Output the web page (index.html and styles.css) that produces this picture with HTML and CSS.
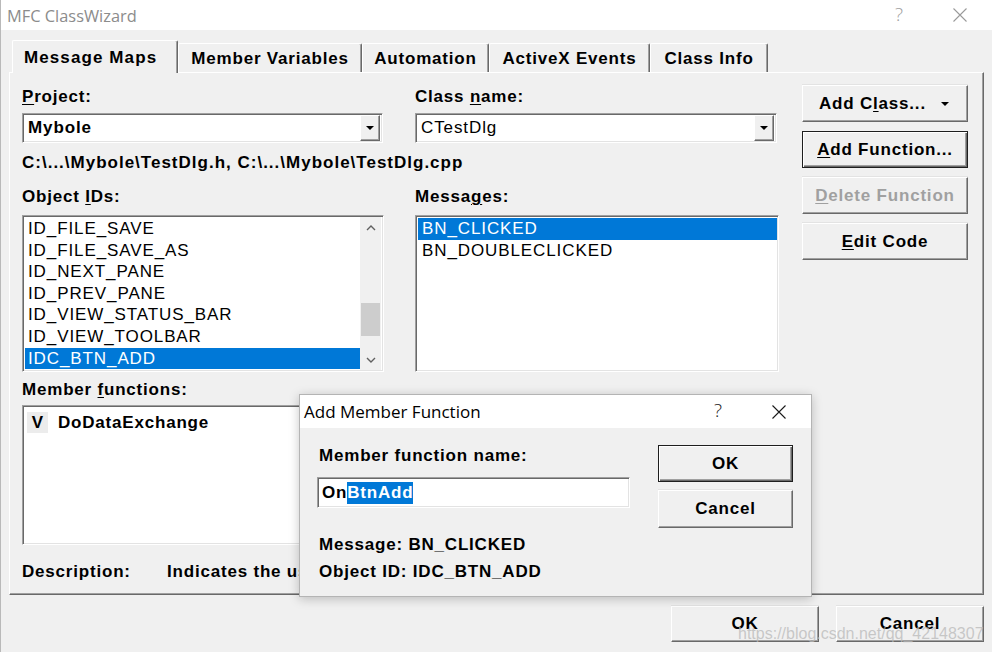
FILE: index.html
```html
<!DOCTYPE html>
<html>
<head>
<meta charset="utf-8">
<title>MFC ClassWizard</title>
<link rel="stylesheet" href="styles.css">
</head>
<body>
<div class="window">
  <div class="titlebar">
    <span class="title">MFC ClassWizard</span>
    <span class="tb-help">?</span>
    <svg class="tb-close" viewBox="0 0 14 14"><path d="M0.5 0.5 L13.5 13.5 M13.5 0.5 L0.5 13.5" stroke="#9a9a9a" stroke-width="1.1" fill="none"/></svg>
  </div>

  <div class="tabs">
    <div class="tab active">Message Maps</div>
    <div class="tab t2">Member Variables</div>
    <div class="tab t3">Automation</div>
    <div class="tab t4">ActiveX Events</div>
    <div class="tab t5">Class Info</div>
  </div>

  <div class="panel">
    <div class="form">
      <div class="lbl"><u>P</u>roject:</div>
      <div class="lbl">Class <u>n</u>ame:</div>

      <div class="combo sunken combo-project">
        <span class="combo-text bold">Mybole</span>
        <span class="drop"><i class="tri"></i></span>
      </div>
      <div class="combo sunken combo-class">
        <span class="combo-text">CTestDlg</span>
        <span class="drop"><i class="tri"></i></span>
      </div>

      <div class="lbl path span2">C:\...\Mybole\TestDlg.h, C:\...\Mybole\TestDlg.cpp</div>

      <div class="lbl l3">Object <u>I</u>Ds:</div>
      <div class="lbl l3">Messa<u>g</u>es:</div>

      <div class="list sunken ids">
        <div class="items">
          <div class="row">ID_FILE_SAVE</div>
          <div class="row">ID_FILE_SAVE_AS</div>
          <div class="row">ID_NEXT_PANE</div>
          <div class="row">ID_PREV_PANE</div>
          <div class="row">ID_VIEW_STATUS_BAR</div>
          <div class="row">ID_VIEW_TOOLBAR</div>
          <div class="row sel">IDC_BTN_ADD</div>
        </div>
        <div class="scrollbar">
          <div class="sb-btn"><svg viewBox="0 0 10 6" class="chev"><path d="M1 5 L5 1 L9 5" stroke="#606060" stroke-width="1.4" fill="none"/></svg></div>
          <div class="sb-track"><div class="sb-thumb"></div></div>
          <div class="sb-btn"><svg viewBox="0 0 10 6" class="chev"><path d="M1 1 L5 5 L9 1" stroke="#606060" stroke-width="1.4" fill="none"/></svg></div>
        </div>
      </div>

      <div class="list sunken msgs">
        <div class="items">
          <div class="row sel">BN_CLICKED</div>
          <div class="row">BN_DOUBLECLICKED</div>
        </div>
      </div>

      <div class="lbl l4 span2">Member <u>f</u>unctions:</div>

      <div class="members sunken span2">
        <div class="mrow">
          <span class="vbox">V</span>
          <span class="mname">DoDataExchange</span>
        </div>
      </div>

      <div class="lbl desc span2">
        <span class="desc-key">Description:</span>
        <span class="desc-val">Indicates the user clicked a button</span>
      </div>
    </div>

    <div class="actions">
      <div class="btn btn-addclass"><span>Add C<u>l</u>ass...</span><i class="tri"></i></div>
      <div class="btn default"><span><u>A</u>dd Function...</span></div>
      <div class="btn disabled"><span><u>D</u>elete Function</span></div>
      <div class="btn"><span><u>E</u>dit Code</span></div>
    </div>
  </div>

  <div class="footer">
    <div class="btn fbtn">OK</div>
    <div class="btn fbtn">Cancel</div>
  </div>
</div>

<div class="popup">
  <div class="pop-title">
    <span class="pop-title-text">Add Member Function</span>
    <span class="pop-help">?</span>
    <svg class="pop-close" viewBox="0 0 14 14"><path d="M0.5 0.5 L13.5 13.5 M13.5 0.5 L0.5 13.5" stroke="#1a1a1a" stroke-width="1.1" fill="none"/></svg>
  </div>
  <div class="pop-body">
    <div class="pop-left">
      <div class="lbl pop-lbl">Member function name:</div>
      <div class="edit sunken"><span class="edit-text">On<span class="hl">BtnAdd</span></span></div>
      <div class="lbl pop-info1">Message: BN_CLICKED</div>
      <div class="lbl pop-info2">Object ID: IDC_BTN_ADD</div>
    </div>
    <div class="pop-right">
      <div class="btn default pbtn-ok">OK</div>
      <div class="btn pbtn-cancel">Cancel</div>
    </div>
  </div>
</div>

<div class="watermark">https://blog.csdn.net/qq_42148307</div>
</body>
</html>
```

FILE: styles.css
```css
* { box-sizing: border-box; }

html, body {
  margin: 0;
  padding: 0;
}

body {
  width: 992px;
  height: 652px;
  overflow: hidden;
  position: relative;
  background: #f0f0f0;
  font-family: "Liberation Sans", Arial, sans-serif;
  color: #000;
}

u { text-decoration: underline; text-decoration-thickness: 1px; text-underline-offset: 2px; }

.window {
  width: 992px;
  height: 652px;
  background: #f0f0f0;
  display: flex;
  flex-direction: column;
  border-left: 1px solid #b9b9b9;
}

/* Title bar */
.titlebar {
  height: 30px;
  flex: none;
  background: #fff;
  display: flex;
  align-items: center;
  padding-left: 6px;
}
.title {
  flex: 1;
  font-family: "Open Sans", sans-serif;
  font-size: 16.4px;
  color: #8c8c8c;
}
.tb-help {
  font-family: "Open Sans", sans-serif;
  font-weight: 300;
  font-size: 19px;
  line-height: 20px;
  color: #a0a0a0;
  margin-right: 50px;
  margin-top: -3px;
}
.tb-close {
  width: 14px;
  height: 14px;
  margin-right: 25px;
}

/* Tabs */
.tabs {
  display: flex;
  align-items: flex-start;
  height: 32px;
  margin: 10px 0 0 11px;
  position: relative;
  z-index: 1;
  flex: none;
}
.tab {
  height: 29px;
  margin-top: 3px;
  border-top: 1px solid #fff;
  border-left: 1px solid #fff;
  border-right: 1px solid #696969;
  box-shadow: inset -1px 0 #a0a0a0;
  border-radius: 2px 2px 0 0;
  display: flex;
  align-items: center;
  justify-content: center;
  padding-top: 1px;
  font-weight: bold;
  font-size: 17px;
  letter-spacing: 0.8px;
  white-space: nowrap;
  background: #f0f0f0;
}
.tab.active {
  width: 166px;
  height: 33px;
  margin-top: 0;
  padding-top: 2px;
  justify-content: flex-start;
  padding-left: 11px;
  letter-spacing: 1.1px;
}
.t2 { width: 184px; }
.t3 { width: 127px; }
.t4 { width: 161px; }
.t5 { width: 118px; }

/* Panel */
.panel {
  flex: none;
  margin-left: 8px;
  width: 975px;
  height: 523px;
  border: 1px solid;
  border-color: #fff #696969 #696969 #fff;
  box-shadow: inset -1px -1px #a0a0a0;
  display: flex;
  align-items: flex-start;
  padding: 14px 0 0 12px;
}

.form {
  width: 757px;
  display: grid;
  grid-template-columns: 362px 364px;
  column-gap: 31px;
  align-content: start;
}

.lbl {
  font-weight: bold;
  font-size: 17px;
  letter-spacing: 0.8px;
  line-height: 20px;
  height: 20px;
  white-space: nowrap;
}
.span2 { grid-column: 1 / 3; }
.bold { font-weight: bold; }

.sunken {
  background: #fff;
  border: 1px solid;
  border-color: #a0a0a0 #fff #fff #a0a0a0;
  box-shadow: inset 1px 1px #696969, inset -1px -1px #e3e3e3;
}

/* Combos */
.combo {
  margin-top: 6px;
  height: 30px;
  display: flex;
  align-items: center;
  padding: 1px;
}
.combo-project { width: 361px; }
.combo-class { width: 362px; }
.combo-text {
  padding-left: 4px;
  font-size: 17px;
  letter-spacing: 0.9px;
  flex: 1;
  white-space: nowrap;
}
.drop {
  width: 20px;
  height: 26px;
  margin-right: 1px;
  background: #f0f0f0;
  border: 1px solid;
  border-color: #fff #696969 #696969 #fff;
  box-shadow: inset -1px -1px #a0a0a0;
  display: flex;
  align-items: center;
  justify-content: center;
}
.tri {
  display: block;
  width: 0;
  height: 0;
  border-left: 4px solid transparent;
  border-right: 4px solid transparent;
  border-top: 4px solid #000;
}

.path { margin-top: 10px; letter-spacing: 1px; }
.l3 { margin-top: 14px; }
.l4 { margin-top: 8px; }

/* Lists */
.list {
  margin-top: 8px;
  height: 157px;
  display: flex;
  padding: 1px;
}
.ids { width: 362px; }
.msgs { width: 364px; }
.items {
  flex: 1;
  padding-top: 1px;
  padding-left: 1px;
  overflow: hidden;
}
.row {
  height: 21.6px;
  line-height: 21.6px;
  padding-left: 3px;
  font-size: 17px;
  letter-spacing: 0.9px;
  white-space: nowrap;
}
.msgs .row { padding-left: 4px; }
.row.sel {
  background: #0078d7;
  color: #fff;
}

.scrollbar {
  width: 21px;
  display: flex;
  flex-direction: column;
  background: #f0f0f0;
  margin-right: 1px;
}
.sb-btn {
  height: 21px;
  display: flex;
  align-items: center;
  justify-content: center;
}
.chev { width: 10px; height: 6px; }
.sb-track { flex: 1; }
.sb-thumb {
  margin: 65px 1px 0 1px;
  height: 33px;
  background: #cdcdcd;
}

/* Member functions */
.members {
  margin-top: 5px;
  height: 140px;
  padding: 6px 2px 2px 4px;
}
.mrow {
  display: flex;
  align-items: center;
  height: 21px;
}
.vbox {
  width: 21px;
  height: 21px;
  background: #ececec;
  display: flex;
  align-items: center;
  justify-content: center;
  font-weight: bold;
  font-size: 17px;
}
.mname {
  margin-left: 10px;
  font-weight: bold;
  font-size: 17px;
  letter-spacing: 0.8px;
}

.desc {
  margin-top: 17px;
  display: flex;
}
.desc-key { width: 145px; flex: none; }

/* Buttons */
.actions {
  margin-left: 23px;
  margin-top: -2px;
  width: 166px;
  display: flex;
  flex-direction: column;
}
.btn {
  height: 37px;
  background: #f0f0f0;
  border: 1px solid;
  border-color: #fff #696969 #696969 #fff;
  box-shadow: inset -1px -1px #a0a0a0, 0 -1px #e3e3e3;
  display: flex;
  align-items: center;
  justify-content: center;
  font-weight: bold;
  font-size: 17px;
  letter-spacing: 0.8px;
  white-space: nowrap;
}
.actions .btn + .btn { margin-top: 9px; }
.btn.default {
  border-color: #1e1e1e;
  box-shadow: inset 1px 1px #fff, inset -1px -1px #696969, inset -2px -2px #a0a0a0;
}
.btn.disabled { color: #a0a0a0; }
.btn-addclass {
  justify-content: flex-start;
  padding-left: 16px;
}
.btn-addclass .tri { margin-left: auto; margin-right: 18px; }

.footer {
  flex: none;
  display: flex;
  justify-content: flex-end;
  gap: 17px;
  padding: 11px 8px 0 0;
}
.fbtn {
  width: 148px;
  height: 36px;
}

/* Popup dialog */
.popup {
  position: absolute;
  left: 299px;
  top: 394px;
  width: 513px;
  height: 203px;
  background: #f0f0f0;
  border: 1px solid #b4b4b4;
  box-shadow: 0 2px 10px rgba(0, 0, 0, 0.22);
  z-index: 5;
}
.pop-title {
  height: 33px;
  background: #fff;
  display: flex;
  align-items: center;
  padding-left: 4px;
}
.pop-title-text {
  flex: 1;
  font-family: "Open Sans", sans-serif;
  font-size: 17px;
  color: #000;
}
.pop-help {
  font-family: "Open Sans", sans-serif;
  font-weight: 300;
  font-size: 19px;
  line-height: 20px;
  color: #1a1a1a;
  margin-right: 50px;
  margin-top: -3px;
}
.pop-close {
  width: 14px;
  height: 14px;
  margin-right: 25px;
}
.pop-body {
  display: flex;
  padding-left: 17px;
}
.pop-left { width: 313px; }
.pop-lbl { margin-top: 18px; padding-left: 2px; }
.edit {
  margin-top: 11px;
  height: 31px;
  width: 313px;
  display: flex;
  align-items: center;
  padding-left: 4px;
}
.edit-text {
  font-weight: bold;
  font-size: 17px;
  letter-spacing: 0.8px;
  white-space: nowrap;
}
.hl {
  display: inline-block;
  background: #0078d7;
  color: #fff;
  line-height: 22px;
}
.pop-info1 { margin-top: 27px; padding-left: 2px; }
.pop-info2 { margin-top: 7px; padding-left: 2px; }
.pop-right {
  margin-left: 28px;
  width: 135px;
  display: flex;
  flex-direction: column;
}
.pbtn-ok { margin-top: 17px; height: 37px; }
.pbtn-cancel { margin-top: 8px; height: 38px; }

.watermark {
  position: absolute;
  left: 738px;
  top: 624px;
  font-family: "Liberation Sans", Arial, sans-serif;
  font-size: 16px;
  line-height: 20px;
  color: rgba(185, 185, 185, 0.75);
  white-space: nowrap;
  z-index: 6;
}
```
